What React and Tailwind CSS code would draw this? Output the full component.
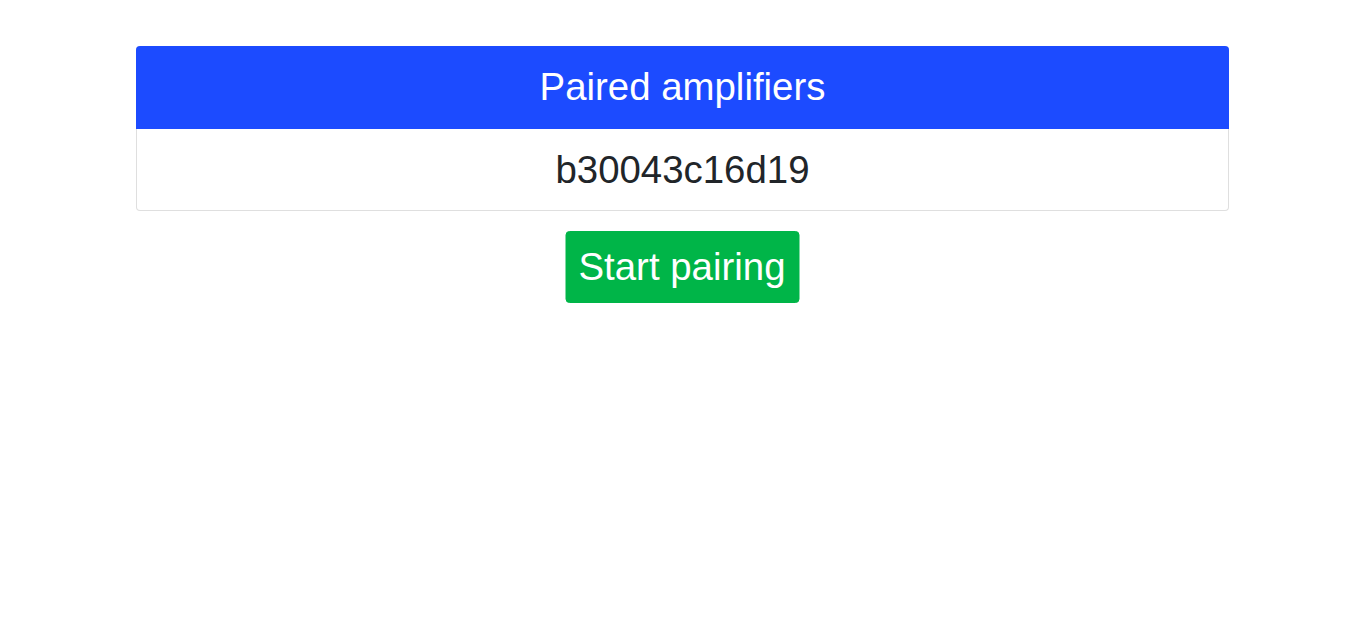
export default function App() {
  return (
    <div className="min-h-screen bg-white font-['Liberation_Sans',Arial,sans-serif] text-[#212529]">
      <div className="mx-auto w-[1093px] pt-[46px] flex flex-col items-center">
        <div className="w-full rounded-[4px] border-x border-b border-[#dfdfdf]">
          <div className="-mx-px rounded-t-[4px] bg-[#1c4bff] text-white text-center text-[38.4px] leading-[57.6px] pt-[12px] pb-[13px]">
            Paired amplifiers
          </div>
          <div className="text-center text-[38.4px] leading-[57.6px] py-[12px]">
            b30043c16d19
          </div>
        </div>
        <button className="mt-[20px] -translate-x-[0.5px] rounded-[4px] bg-[#00b548] border border-[#00b548] text-white text-[38.4px] leading-[57.6px] px-[12.5px] py-[6px]">
          Start pairing
        </button>
      </div>
    </div>
  );
}
